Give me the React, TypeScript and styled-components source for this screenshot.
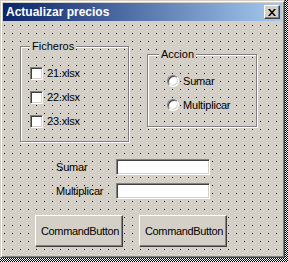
import React from 'react'
import styled, { createGlobalStyle } from 'styled-components'

const GlobalStyle = createGlobalStyle`
  html, body {
    margin: 0;
    padding: 0;
  }
  body {
    width: 288px;
    height: 262px;
    overflow: hidden;
    font-family: "Liberation Sans", Arial, sans-serif;
    font-size: 11px;
    color: #000;
  }
`

const Desk = styled.div`
  width: 288px;
  height: 262px;
  background: repeating-conic-gradient(#000 0 25%, #fff 0 50%) 0 0 / 2px 2px;
`

const Form = styled.div`
  width: 285px;
  height: 258px;
  box-sizing: border-box;
  padding: 2px;
  background: #d4d0c8;
  border: 1px solid;
  border-color: #d4d0c8 #404040 #404040 #d4d0c8;
  box-shadow: inset 1px 1px 0 #fff, inset -1px -1px 0 #808080;
  display: flex;
  flex-direction: column;
`

const TitleBar = styled.div`
  height: 18px;
  flex: none;
  display: flex;
  align-items: center;
  justify-content: space-between;
  padding: 0 2px 0 3px;
  background: linear-gradient(to right, #0a246a, #a6caf0);
  color: #fff;
  font-weight: bold;
  font-size: 12px;
`

const CloseButton = styled.div`
  width: 16px;
  height: 14px;
  box-sizing: border-box;
  background: #d4d0c8;
  border: 1px solid;
  border-color: #fff #404040 #404040 #fff;
  box-shadow: inset -1px -1px 0 #808080;
  display: flex;
  align-items: center;
  justify-content: center;
`

// design-mode grid: one black dot every 8px
const Canvas = styled.div`
  flex: 1;
  margin-top: 1px;
  display: flex;
  flex-direction: column;
  background-color: #d4d0c8;
  background-image: linear-gradient(90deg, #d4d0c8 7px, transparent 7px),
    linear-gradient(#d4d0c8 7px, #000 7px);
  background-size: 8px 8px;
  background-position: 2px 4px;
`

const FramesRow = styled.div`
  display: flex;
  align-items: flex-start;
  margin-top: 18px;
  padding-left: 17px;
`

const Frame = styled.fieldset<{ $width: number; $top?: number; $left?: number }>`
  width: ${({ $width }) => $width}px;
  box-sizing: border-box;
  margin: ${({ $top }) => $top || 0}px 0 0 ${({ $left }) => $left || 0}px;
  padding: 0;
  min-width: 0;
  border: 1px solid #808080;
  box-shadow: inset 1px 1px 0 #fff, 1px 1px 0 #fff;
`

const Caption = styled.legend<{ $indent: number }>`
  margin-left: ${({ $indent }) => $indent}px;
  padding: 0 2px;
  line-height: 13px;
  background: #d4d0c8;
`

const Options = styled.div<{ $pad: number; $bottom: number }>`
  display: flex;
  flex-direction: column;
  gap: 8px;
  padding: 12px 0 ${({ $bottom }) => $bottom}px ${({ $pad }) => $pad}px;
`

const OptionRow = styled.label`
  height: 16px;
  display: flex;
  align-items: center;
  gap: 4px;
  line-height: 13px;
  letter-spacing: -0.2px;
`

const CheckBox = styled.span`
  width: 13px;
  height: 13px;
  box-sizing: border-box;
  background: #fff;
  border: 1px solid;
  border-color: #808080 #fff #fff #808080;
  box-shadow: inset 1px 1px 0 #404040, inset -1px -1px 0 #d4d0c8;
`

const Radio = styled.span`
  width: 12px;
  height: 12px;
  box-sizing: border-box;
  border-radius: 50%;
  background: #fff;
  border: 1px solid;
  border-color: #808080 #fff #fff #808080;
  box-shadow: inset 1px 1px 0 #404040, inset -1px -1px 0 #d4d0c8;
`

const Fields = styled.div`
  display: flex;
  flex-direction: column;
  gap: 8px;
  margin-top: 17px;
  padding-left: 53px;
`

const FieldRow = styled.div`
  height: 16px;
  display: flex;
  align-items: center;
`

const FieldLabel = styled.span`
  width: 60px;
  line-height: 13px;
  letter-spacing: -0.2px;
`

const TextBox = styled.div`
  width: 94px;
  height: 16px;
  box-sizing: border-box;
  background: #fff;
  border: 1px solid;
  border-color: #808080 #fff #fff #808080;
  box-shadow: inset 1px 1px 0 #404040, inset -1px -1px 0 #d4d0c8;
`

const Buttons = styled.div`
  display: flex;
  gap: 16px;
  margin-top: 16px;
  padding-left: 32px;
`

const CommandButton = styled.div`
  width: 88px;
  height: 32px;
  box-sizing: border-box;
  padding-left: 5px;
  display: flex;
  align-items: center;
  background: #d4d0c8;
  border: 1px solid;
  border-color: #fff #404040 #404040 #fff;
  box-shadow: inset -1px -1px 0 #808080;
  white-space: nowrap;
  line-height: 13px;
  letter-spacing: -0.35px;
`

const files = ['21.xlsx', '22.xlsx', '23.xlsx']
const actions = ['Sumar', 'Multiplicar']

export default function App() {
  return (
    <>
      <GlobalStyle />
      <Desk>
        <Form>
          <TitleBar>
            <span>Actualizar precios</span>
            <CloseButton>
              <svg width="8" height="7" viewBox="0 0 8 7">
                <path d="M0 0h2l2 2.4 2-2.4h2L5 3.5 8 7H6L4 4.6 2 7H0l3-3.5z" fill="#000" />
              </svg>
            </CloseButton>
          </TitleBar>
          <Canvas>
            <FramesRow>
              <Frame $width={109}>
                <Caption $indent={9}>Ficheros</Caption>
                <Options $pad={9} $bottom={12}>
                  {files.map(f => (
                    <OptionRow key={f}>
                      <CheckBox />
                      {f}
                    </OptionRow>
                  ))}
                </Options>
              </Frame>
              <Frame $width={110} $top={8} $left={18}>
                <Caption $indent={11}>Accion</Caption>
                <Options $pad={19} $bottom={13}>
                  {actions.map(a => (
                    <OptionRow key={a}>
                      <Radio />
                      {a}
                    </OptionRow>
                  ))}
                </Options>
              </Frame>
            </FramesRow>
            <Fields>
              {actions.map(a => (
                <FieldRow key={a}>
                  <FieldLabel>{a}</FieldLabel>
                  <TextBox />
                </FieldRow>
              ))}
            </Fields>
            <Buttons>
              <CommandButton>CommandButton</CommandButton>
              <CommandButton>CommandButton</CommandButton>
            </Buttons>
          </Canvas>
        </Form>
      </Desk>
    </>
  )
}
